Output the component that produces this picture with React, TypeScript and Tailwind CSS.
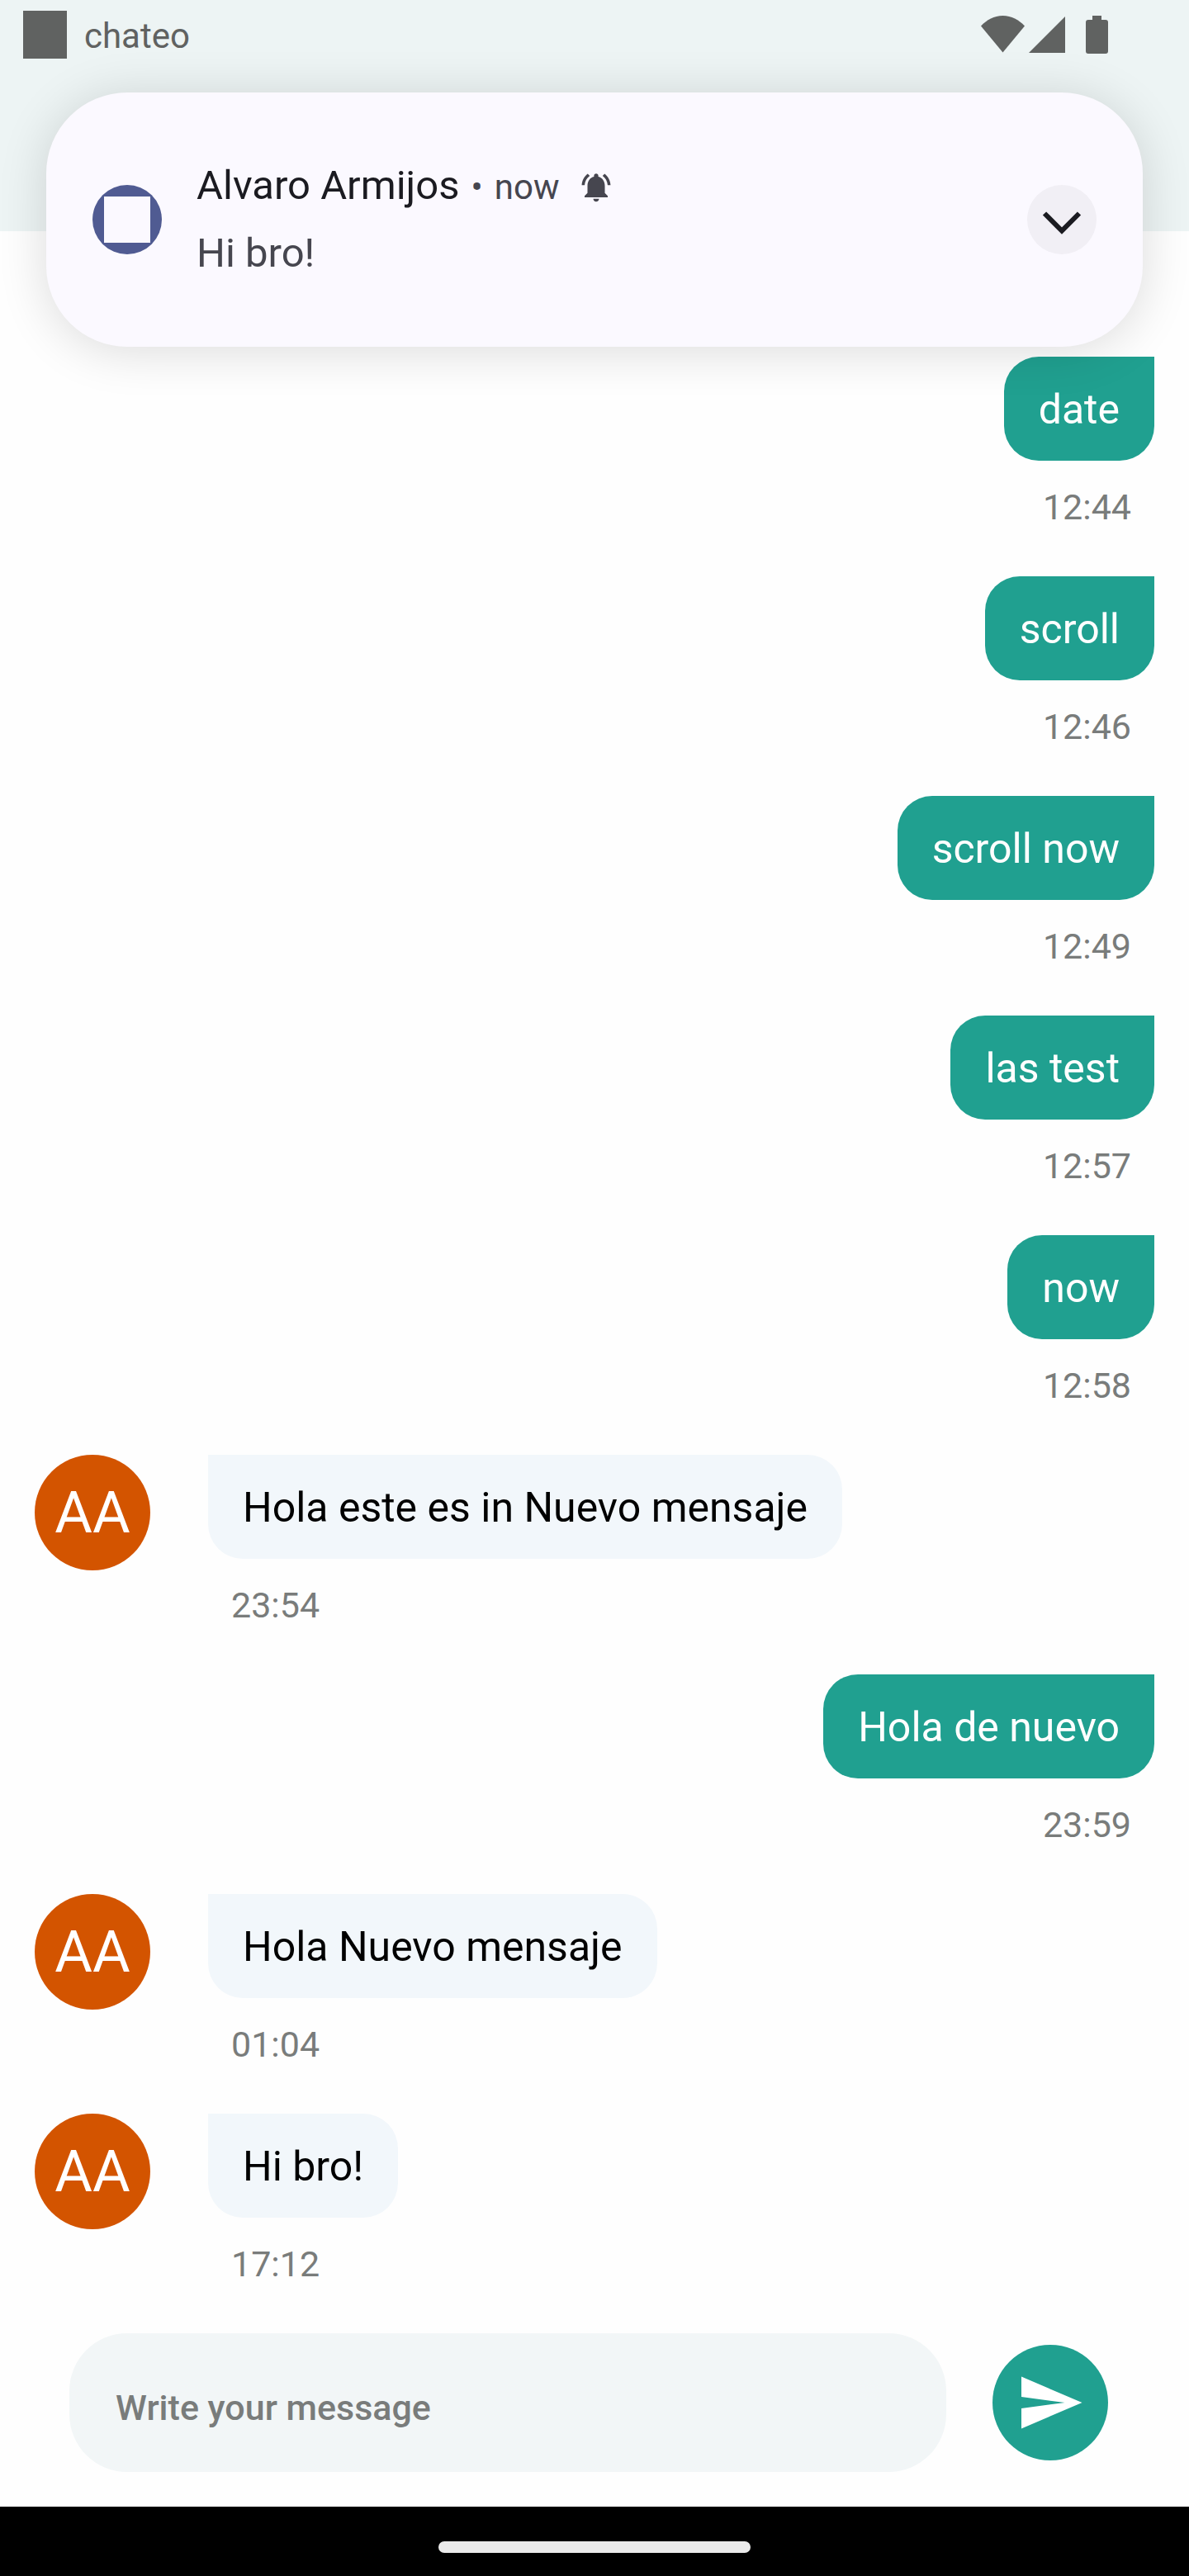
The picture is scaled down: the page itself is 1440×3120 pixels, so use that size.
import React from "react";

type Message = { text: string; time: string; mine: boolean };

const messages: Message[] = [
  { text: "date", time: "12:44", mine: true },
  { text: "scroll", time: "12:46", mine: true },
  { text: "scroll now", time: "12:49", mine: true },
  { text: "las test", time: "12:57", mine: true },
  { text: "now", time: "12:58", mine: true },
  { text: "Hola este es in Nuevo mensaje", time: "23:54", mine: false },
  { text: "Hola de nuevo", time: "23:59", mine: true },
  { text: "Hola Nuevo mensaje", time: "01:04", mine: false },
  { text: "Hi bro!", time: "17:12", mine: false },
];

function StatusBar() {
  return (
    <div className="flex h-[84px] items-center justify-between pr-[98px] pl-7 text-[#606261]">
      <div className="flex items-center gap-[21px]">
        <span className="h-[58px] w-[53px] bg-current" />
        <span className="pt-1 text-[42px] leading-[56px]">chateo</span>
      </div>
      <div className="flex items-center" aria-hidden="true">
        <svg className="h-[46px] w-[53px]" viewBox="0 0 53 46" fill="currentColor">
          <path d="M0 12.5C7 5 16 0 26.500 0S46 5 53 12.500L26.500 44.500z" />
        </svg>
        <svg className="ml-[5px] h-[46px] w-[44px]" viewBox="0 0 44 46" fill="currentColor">
          <path d="M44 1v44H0z" />
        </svg>
        <svg className="ml-[25px] h-[46px] w-[27px]" viewBox="0 0 27 46" fill="currentColor">
          <path d="M8 0h11v5h5a3 3 0 0 1 3 3v35a3 3 0 0 1-3 3H3a3 3 0 0 1-3-3V8a3 3 0 0 1 3-3h5z" />
        </svg>
      </div>
    </div>
  );
}

function Notification() {
  return (
    <section className="absolute inset-x-14 top-28 flex min-h-[308px] items-center rounded-[98px] bg-[#fbf9ff] px-14 shadow-[0_5px_60px_rgba(0,0,0,0.14)]">
      <div className="flex size-[84px] shrink-0 items-center justify-center rounded-full bg-[#505b92]">
        <span className="size-14 bg-[#fbf9ff]" />
      </div>
      <div className="ml-[42px] flex-1 text-[49px] leading-[82px]">
        <div className="flex items-baseline">
          <h1 className="text-[#1b1b21]">Alvaro Armijos</h1>
          <span className="mx-3.5 text-[42px] leading-none text-[#46464f]">•</span>
          <span className="text-[42px] leading-none text-[#46464f]">now</span>
          <svg className="ml-6 size-[42px] self-center text-[#46464f]" viewBox="0 -1 24 24" fill="currentColor" aria-label="Alerting">
            <path d="M7.580 4.080L6.150 2.650C3.750 4.480 2.170 7.300 2.030 10.500h2c.15-2.650 1.510-4.970 3.550-6.420zm12.390 6.420h2c-.15-3.200-1.730-6.020-4.120-7.850l-1.420 1.430c2.020 1.450 3.390 3.770 3.540 6.420zM18 11c0-3.070-1.640-5.640-4.500-6.320V4c0-.83-.67-1.500-1.500-1.500s-1.500.67-1.500 1.500v.68C7.630 5.360 6 7.920 6 11v5l-2 2v1h16v-1l-2-2v-5zm-6 11c1.100 0 2-.9 2-2h-4c0 1.100.9 2 2 2z" />
          </svg>
        </div>
        <p className="text-[#46464f]">Hi bro!</p>
      </div>
      <button type="button" aria-label="Expand" className="flex size-[84px] shrink-0 items-center justify-center rounded-full bg-[#f1eff5] text-[#1b1b21]">
        <svg className="size-[84px]" viewBox="0 0 84 84" fill="none" stroke="currentColor" strokeWidth="6">
          <path d="M21 34.500L42 55.500L63 34.500" />
        </svg>
      </button>
    </section>
  );
}

function MessageRow({ text, time, mine }: Message) {
  if (mine) {
    return (
      <li className="flex flex-col items-end gap-7">
        <p className="rounded-[42px] rounded-tr-none bg-[#20a090] px-[42px] pt-[29px] pb-[27px] text-[50px] leading-[70px] text-white">{text}</p>
        <time className="pr-7 text-[43px] leading-[56px] text-[#797c7b]">{time}</time>
      </li>
    );
  }
  return (
    <li className="flex items-start gap-[70px]">
      <span className="flex size-[140px] shrink-0 items-center justify-center rounded-full bg-[#d35400] text-[70px] leading-none text-white">AA</span>
      <div className="flex flex-col items-start gap-7">
        <p className="rounded-[42px] rounded-tl-none bg-[#f2f7fb] px-[42px] pt-[29px] pb-[27px] text-[50px] leading-[70px] text-black">{text}</p>
        <time className="pl-7 text-[43px] leading-[56px] text-[#797c7b]">{time}</time>
      </div>
    </li>
  );
}

export default function App() {
  return (
    <div className="relative flex min-h-screen flex-col bg-[#fefefe] font-[Roboto,sans-serif]">
      <header className="h-[280px] bg-[#edf4f4]">
        <StatusBar />
      </header>
      <ul className="flex flex-1 flex-col gap-14 px-[42px] pt-[152px] pb-14">
        {messages.map((m) => (
          <MessageRow key={m.time} {...m} />
        ))}
      </ul>
      <form className="flex items-center gap-14 pr-[98px] pb-[42px] pl-[84px]" onSubmit={(e) => e.preventDefault()}>
        <input
          type="text"
          aria-label="Message"
          placeholder="Write your message"
          className="h-[168px] min-w-0 flex-1 rounded-[70px] bg-[#f2f6f7] px-14 pt-3 text-[43px] font-medium text-black outline-none placeholder:text-[#797c7b]"
        />
        <button type="submit" aria-label="Send" className="flex size-[140px] shrink-0 items-center justify-center rounded-full bg-[#20a090] text-white">
          <svg className="size-[84px]" viewBox="0 0 24 24" fill="currentColor">
            <path d="M2 21L23 12 2 3v7l15 2-15 2z" />
          </svg>
        </button>
      </form>
      <footer className="flex justify-center bg-black pt-[42px] pb-7">
        <span className="h-3.5 w-[378px] rounded-full bg-[#ebebeb]" />
      </footer>
      <Notification />
    </div>
  );
}
